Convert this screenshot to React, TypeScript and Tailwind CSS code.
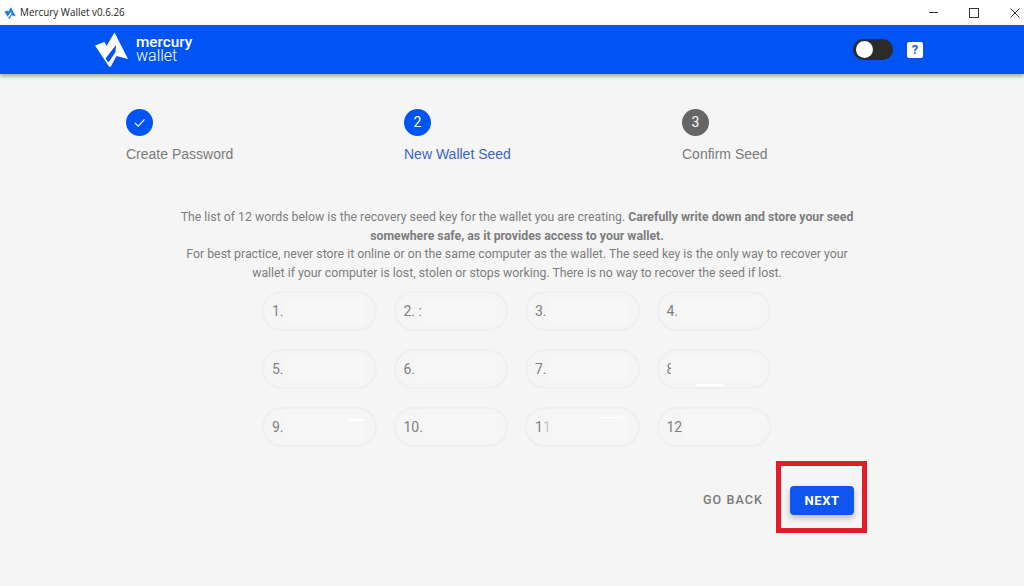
import React from "react";

const roboto = "font-['Roboto',sans-serif]";

function Logo({ className, fill }: { className: string; fill: string }) {
  return (
    <svg viewBox="0 0 33 35" className={className}>
      <path
        fill={fill}
        fillRule="evenodd"
        d="M0 13.5 L9.5 10 L11.5 14 L19.5 0.5 L33 27 L21.5 24 L15.5 35 L14 34.5 Z M21 13 L10.5 26.5 L13.5 30.5 L20.5 20 Z"
      />
    </svg>
  );
}

function Step({ label, active, done, n }: { label: string; active?: boolean; done?: boolean; n: number }) {
  return (
    <div className="w-[278px] flex flex-col items-start">
      <div
        className={`w-[27px] h-[27px] rounded-full flex items-center justify-center text-white text-[14px] ${roboto} ${active || done ? "bg-[#0054f4]" : "bg-[#666666]"}`}
      >
        {done ? (
          <svg viewBox="0 0 24 24" className="w-[15px] h-[15px]" fill="none" stroke="white" strokeWidth="1.8">
            <path d="M4.5 12.5 L10 18 L20 7" />
          </svg>
        ) : (
          n
        )}
      </div>
      <div
        className={`mt-[9px] text-[14px] leading-[18px] font-['Liberation_Sans',sans-serif] ${active ? "text-[#3a66c4]" : "text-[#7b7b7b]"}`}
      >
        {label}
      </div>
    </div>
  );
}

type WordData = { n: string; fill?: string; faint?: string; streak?: string };

function Word({ n, fill, faint, streak }: WordData) {
  return (
    <div
      className={`relative h-[40px] rounded-[20px] border-2 border-[#efefef] pl-[8px] pr-[10px] pt-[1px] flex items-center text-[14px] text-[#7f7f7f] ${roboto}`}
    >
      <span>{n}</span>
      {faint && <span className="text-[#c9c6c0]">{faint}</span>}
      <div className={`flex-1 h-[26px] bg-[#f7f7f7] ${fill ?? "ml-[2px]"}`} />
      {streak && <div className={`absolute bg-white ${streak}`} />}
    </div>
  );
}

const words: WordData[] = [
  { n: "1." },
  { n: "2. :" },
  { n: "3." },
  { n: "4." },
  { n: "5." },
  { n: "6." },
  { n: "7." },
  { n: "8", fill: "-ml-[3px] relative", streak: "left-[37px] top-[33px] w-[28px] h-[3px]" },
  { n: "9.", streak: "left-[85px] top-[10px] w-[15px] h-[2px]" },
  { n: "10." },
  { n: "1", faint: "1", streak: "left-[73px] top-[8px] w-[23px] h-[1px]" },
  { n: "12" },
];

export default function App() {
  return (
    <div className="w-[1024px] h-[586px] overflow-hidden bg-[#f5f5f5] flex flex-col relative">
      <div className="h-[25px] bg-white flex items-center shrink-0">
        <Logo className="w-[12px] h-[12px] ml-[4px]" fill="#1b7fd6" />
        <span className="ml-[4px] text-[9.9px] text-[#222222] font-['Open_Sans',sans-serif]">Mercury Wallet v0.6.26</span>
        <div className="ml-auto flex items-center gap-[31px] pr-[4px]">
          <div className="w-[9px] h-[1px] bg-[#333333]" />
          <div className="w-[10px] h-[10px] border border-[#333333]" />
          <svg viewBox="0 0 10 10" className="w-[10px] h-[10px]" stroke="#333333" strokeWidth="1">
            <path d="M0.5 0.5 L9.5 9.5 M9.5 0.5 L0.5 9.5" />
          </svg>
        </div>
      </div>

      <div className="h-[49px] bg-[#0054f4] shrink-0 flex items-center pl-[95px] pr-[101px] shadow-[0_2px_4px_rgba(0,0,0,0.35)] z-10">
        <Logo className="w-[33px] h-[35px]" fill="white" />
        <div className={`ml-[8px] text-white leading-[14px] -mt-[1px] ${roboto}`}>
          <div className="font-medium text-[15.3px]">mercury</div>
          <div className="font-light text-[16px]">wallet</div>
        </div>
        <div className="ml-auto w-[40px] h-[21px] rounded-full bg-[#2b2b2b] p-[3px] flex items-center">
          <div className="w-[17px] h-[17px] rounded-full bg-white" />
        </div>
        <div
          className={`ml-[14px] mt-[1px] w-[16px] h-[16px] rounded-[2px] bg-white flex items-center justify-center text-[13px] font-bold text-[#2b62c4] ${roboto}`}
        >
          ?
        </div>
      </div>

      <div className="flex-1 flex flex-col pt-[35px]">
        <div className="flex pl-[126px]">
          <Step n={1} label="Create Password" done />
          <Step n={2} label="New Wallet Seed" active />
          <Step n={3} label="Confirm Seed" />
        </div>

        <div className={`mt-[45px] ml-[162px] w-[710px] text-center text-[12.3px] leading-[18.7px] text-[#7d7d7d] ${roboto}`}>
          <div className="px-[10px]">
            The list of 12 words below is the recovery seed key for the wallet you are creating.{" "}
            <span className="font-bold">Carefully write down and store your seed somewhere safe, as it provides access to your wallet.</span>
          </div>
          <div className="px-[10px]">
            For best practice, never store it online or on the same computer as the wallet. The seed key is the only way to recover your wallet if your computer is lost, stolen or stops working. There is no way to recover the seed if lost.
          </div>
        </div>

        <div className="mt-[8px] ml-[262px] w-[509px] grid grid-cols-4 gap-x-[17px] gap-y-[18px]">
          {words.map((w) => (
            <Word key={w.n + (w.faint ?? "")} {...w} />
          ))}
        </div>

        <div className="mt-[39px] ml-[703px] flex items-center">
          <span className={`text-[12.5px] font-medium tracking-[1.1px] text-[#7a7a7a] ${roboto}`}>GO BACK</span>
          <div
            className={`ml-[27px] w-[64px] h-[29px] rounded-[4px] bg-[#0f56f0] text-white text-[13px] font-bold tracking-[0.6px] flex items-center justify-center shadow-[0_3px_6px_rgba(0,0,0,0.25)] ${roboto}`}
          >
            NEXT
          </div>
        </div>
      </div>

      <div className="absolute left-[776px] top-[461px] w-[91px] h-[72px] border-[5px] border-[#e01e2b]" />
    </div>
  );
}
